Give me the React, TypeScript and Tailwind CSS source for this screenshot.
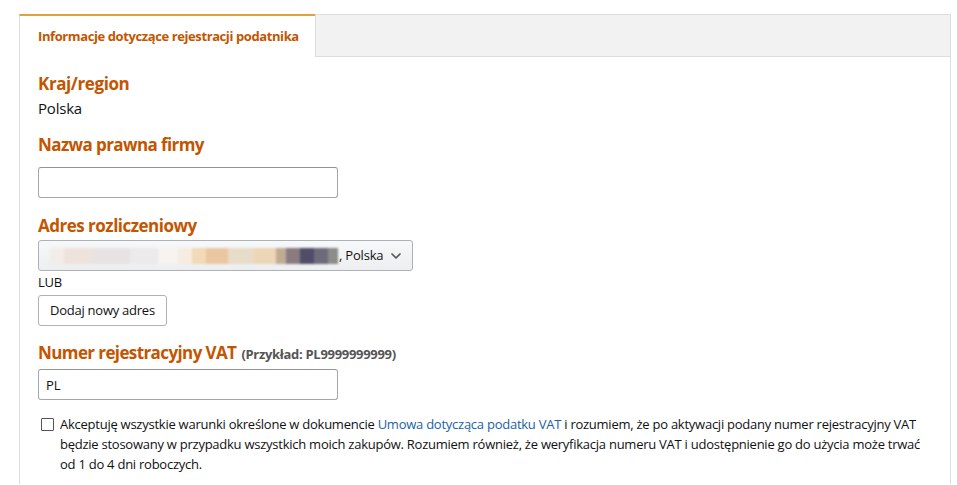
import { ChevronDown } from 'lucide-react'

const blur = [
  { w: 14, c: '#f4ece9' },
  { w: 30, c: '#eee2dd' },
  { w: 36, c: '#e7e3e3' },
  { w: 28, c: '#eceaea' },
  { w: 20, c: '#f6f3f0' },
  { w: 14, c: '#f6ecdf' },
  { w: 14, c: '#f2d9b8' },
  { w: 22, c: '#eac7a1' },
  { w: 26, c: '#e8dcc8' },
  { w: 22, c: '#ecd6b6' },
  { w: 10, c: '#c2ab95' },
  { w: 14, c: '#8a7b80' },
  { w: 14, c: '#4f4d68' },
  { w: 14, c: '#6d6b7a' },
  { w: 10, c: '#8c8c88' },
]

export default function App() {
  return (
    <div className="min-h-[485px] bg-white pl-[19px] pt-[14px] font-['Open_Sans',sans-serif] text-[#111]">
      <div className="w-[932px]">
        {/* tabs */}
        <div className="flex h-[43px]">
          <div className="flex w-[296px] items-center whitespace-nowrap border-l border-t-2 border-l-[#ddd] border-t-[#e3a13b] bg-white pl-[18px] text-[13px] font-bold tracking-[-0.4px] text-[#c45500]">
            Informacje dotyczące rejestracji podatnika
          </div>
          <div className="flex-1 border border-[#ddd] bg-[#f2f2f2]" />
        </div>

        <div className="border-x border-[#ddd] px-[18px] pb-[10px] pt-[15px]">
          <div className="text-[17px] font-bold leading-[24px] tracking-[-0.4px] text-[#c45500]">Kraj/region</div>
          <div className="text-[15px] leading-[24px] tracking-[-0.2px]">Polska</div>

          <div className="mt-[13px] text-[17px] font-bold leading-[24px] tracking-[-0.6px] text-[#c45500]">Nazwa prawna firmy</div>
          <input
            type="text"
            className="mt-[10px] block h-[31px] w-[300px] rounded-[3px] border border-[#a6a6a6] border-t-[#949494] px-[7px] text-[13px] outline-none"
          />

          <div className="mt-[16px] text-[17px] font-bold leading-[24px] tracking-[-0.5px] text-[#c45500]">Adres rozliczeniowy</div>
          <div className="mt-[2px] flex h-[31px] w-[375px] items-center rounded-[3px] border border-[#adb1b8] bg-gradient-to-b from-[#f7f8fa] to-[#eceef0] pl-[11px] pr-[8px] text-[13px] tracking-[-0.2px]">
            <div className="flex h-[20px] items-center blur-[1px]">
              {blur.map((b, i) => (
                <span key={i} className="block h-[16px]" style={{ width: b.w, background: b.c }} />
              ))}
            </div>
            <span className="ml-[1px]">, Polska</span>
            <ChevronDown className="ml-auto h-[16px] w-[16px] text-[#555]" strokeWidth={2.5} />
          </div>

          <div className="mt-[2px] text-[13px] leading-[18px] tracking-[-0.2px]">LUB</div>
          <button className="mt-[4px] block h-[31px] rounded-[3px] border border-[#adb1b8] bg-white px-[11px] text-[13px] tracking-[-0.25px] text-[#111]">
            Dodaj nowy adres
          </button>

          <div className="mt-[15px] flex items-baseline gap-[5px] leading-[24px]">
            <span className="text-[17px] font-bold tracking-[-0.6px] text-[#c45500]">Numer rejestracyjny VAT</span>
            <span className="text-[13px] font-bold tracking-[-0.3px] text-[#555]">(Przykład: PL9999999999)</span>
          </div>
          <input
            type="text"
            defaultValue="PL"
            className="mt-[3px] block h-[31px] w-[300px] rounded-[3px] border border-[#a6a6a6] border-t-[#949494] px-[7px] text-[13px] outline-none"
          />

          <div className="mt-[14px] flex items-start gap-[6px]">
            <span className="ml-[3px] mt-[4px] block h-[13px] w-[13px] shrink-0 rounded-[1px] border border-[#555] bg-white" />
            <p className="w-[872px] text-[13px] leading-[20px] tracking-[-0.25px]">
              Akceptuję wszystkie warunki określone w dokumencie{' '}
              <a className="text-[#2162a1]">Umowa dotycząca podatku VAT</a> i rozumiem, że po aktywacji podany numer
              rejestracyjny VAT będzie stosowany w przypadku wszystkich moich zakupów. Rozumiem również, że weryfikacja
              numeru VAT i udostępnienie go do użycia może trwać od 1 do 4 dni roboczych.
            </p>
          </div>
        </div>
      </div>
    </div>
  )
}
